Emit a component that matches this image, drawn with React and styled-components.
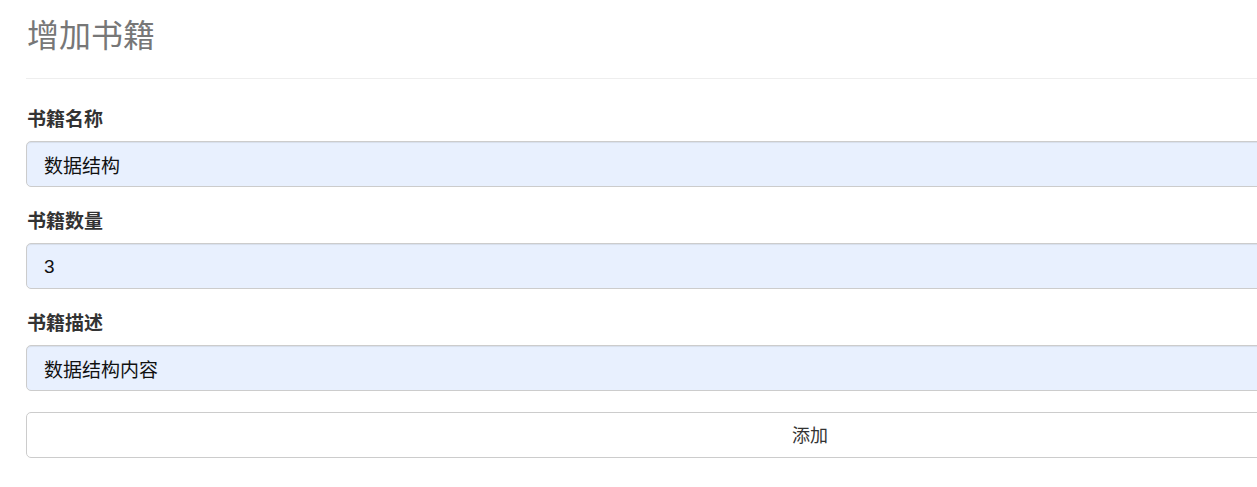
import React, { useState } from "react";
import styled, { createGlobalStyle } from "styled-components";

function App() {
    const [inputs, setInputs] = useState({
        name: '数据结构',
        count: '3',
        desc: '数据结构内容'
    });

    const handleChange = (e) => {
        const { name, value } = e.target;
        setInputs(inputs => ({ ...inputs, [name]: value }));
    };

    return (
        <Page>
            <GlobalStyle />
            <Heading>增加书籍</Heading>
            <Divider />
            <Form onSubmit={(e) => e.preventDefault()}>
                <FormGroup>
                    <Label>书籍名称</Label>
                    <Input name="name" value={inputs.name} onChange={handleChange} />
                </FormGroup>
                <FormGroup>
                    <Label>书籍数量</Label>
                    <Input name="count" value={inputs.count} onChange={handleChange} />
                </FormGroup>
                <FormGroup>
                    <Label>书籍描述</Label>
                    <Input name="desc" value={inputs.desc} onChange={handleChange} />
                </FormGroup>
                <SubmitButton type="submit">添加</SubmitButton>
            </Form>
        </Page>
    );
}

export default App;

const GlobalStyle = createGlobalStyle`
  body {
    margin: 0;
    background-color: #ffffff;
    overflow: hidden;
    font-family: "Liberation Sans", "Noto Sans CJK SC", sans-serif;
    color: #333333;
  }
`
const Page = styled.div`
  width: 1568px;
  padding-left: 26px;
`
const Heading = styled.h2`
  margin: 0;
  padding-top: 19px;
  font-size: 32px;
  line-height: 34px;
  font-weight: 400;
  color: #777777;
  padding-left: 1px;
`
const Divider = styled.hr`
  margin: 25px 0 0;
  border: 0;
  border-top: 1px solid #eeeeee;
`
const Form = styled.form`
  display: flex;
  flex-direction: column;
  gap: 21px;
  padding-top: 27px;
`
const FormGroup = styled.div`
  display: flex;
  flex-direction: column;
`
const Label = styled.label`
  font-size: 19px;
  line-height: 28px;
  font-weight: 700;
  color: #333333;
  margin-bottom: 7px;
  padding-left: 1px;
`
const Input = styled.input`
  box-sizing: border-box;
  height: 46px;
  padding: 10px 16px 9px 17px;
  font-size: 19px;
  font-family: inherit;
  color: #111111;
  background-color: #e8f0fe;
  border: 1px solid #cccccc;
  border-radius: 5px;
  box-shadow: inset 0 1px 1px rgba(0, 0, 0, 0.075);
  outline: none;
`
const SubmitButton = styled.button`
  box-sizing: border-box;
  height: 46px;
  padding: 8px 16px 12px;
  font-size: 18px;
  font-family: inherit;
  color: #333333;
  background-color: #ffffff;
  border: 1px solid #cccccc;
  border-radius: 5px;
  cursor: pointer;
`
